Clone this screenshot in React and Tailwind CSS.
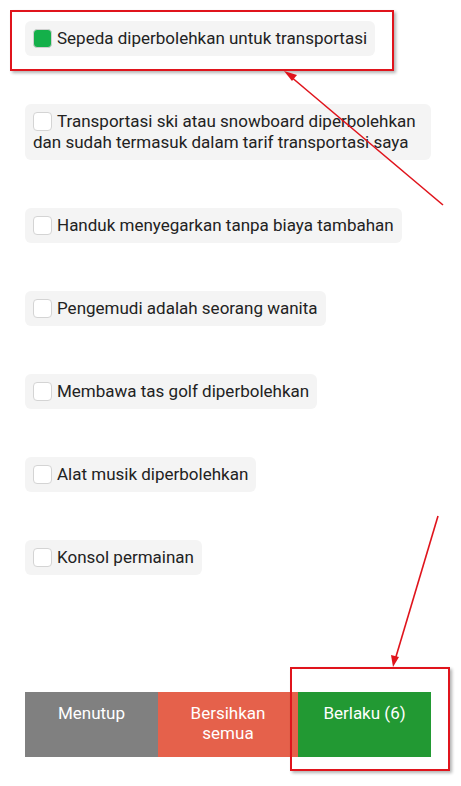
const options = [
  { label: "Sepeda diperbolehkan untuk transportasi", checked: true },
  { label: "Transportasi ski atau snowboard diperbolehkan dan sudah termasuk dalam tarif transportasi saya", checked: false },
  { label: "Handuk menyegarkan tanpa biaya tambahan", checked: false },
  { label: "Pengemudi adalah seorang wanita", checked: false },
  { label: "Membawa tas golf diperbolehkan", checked: false },
  { label: "Alat musik diperbolehkan", checked: false },
  { label: "Konsol permainan", checked: false },
];

const Option = ({ label, checked }) => (
  <div className="self-start max-w-[406px] bg-[#f4f4f4] rounded-md px-2 py-[7px] text-[17px] leading-[21px] text-[#222]">
    <span
      className={`inline-block align-[-4px] w-[19px] h-[19px] mr-[5px] rounded-[4px] border ${
        checked ? "bg-[#14b04a] border-[#cfcfcf]" : "bg-white border-[#d4d4d4]"
      }`}
    />
    {label}
  </div>
);

export default function App() {
  return (
    <div
      className="relative w-[461px] h-[786px] bg-white overflow-hidden"
      style={{ fontFamily: "Roboto, 'Liberation Sans', sans-serif" }}
    >
      <div className="flex flex-col gap-[48px] px-[25px] pt-[21px]">
        {options.map((o) => (
          <Option key={o.label} {...o} />
        ))}
      </div>

      <div className="flex mx-[25px] mt-[117px] h-[65px] text-white text-[17px] leading-[20px]">
        <button className="w-[133px] bg-[#808080] pt-[11px] flex justify-center items-start">
          Menutup
        </button>
        <button className="w-[140px] bg-[#e5614b] pt-[11px] flex justify-center items-start text-center">
          Bersihkan
          <br />
          semua
        </button>
        <button className="w-[133px] bg-[#229933] pt-[11px] flex justify-center items-start">
          Berlaku (6)
        </button>
      </div>

      {/* annotation boxes and arrows */}
      <div className="absolute left-[10px] top-[10px] w-[384px] h-[61px] border-2 border-[#e0141c] shadow-[2px_2px_3px_rgba(0,0,0,0.3)]" />
      <div className="absolute left-[290px] top-[667px] w-[160px] h-[104px] border-2 border-[#e0141c] shadow-[2px_2px_3px_rgba(0,0,0,0.3)]" />
      <svg className="absolute inset-0 pointer-events-none" width="461" height="786">
        <line x1="443" y1="205" x2="290" y2="76" stroke="#e0141c" strokeWidth="1.6" />
        <polygon points="284,71 297,75 292,81" fill="#e0141c" />
        <line x1="438" y1="516" x2="395" y2="660" stroke="#e0141c" strokeWidth="1.6" />
        <polygon points="393,667 391,655 399,657" fill="#e0141c" />
      </svg>
    </div>
  );
}
